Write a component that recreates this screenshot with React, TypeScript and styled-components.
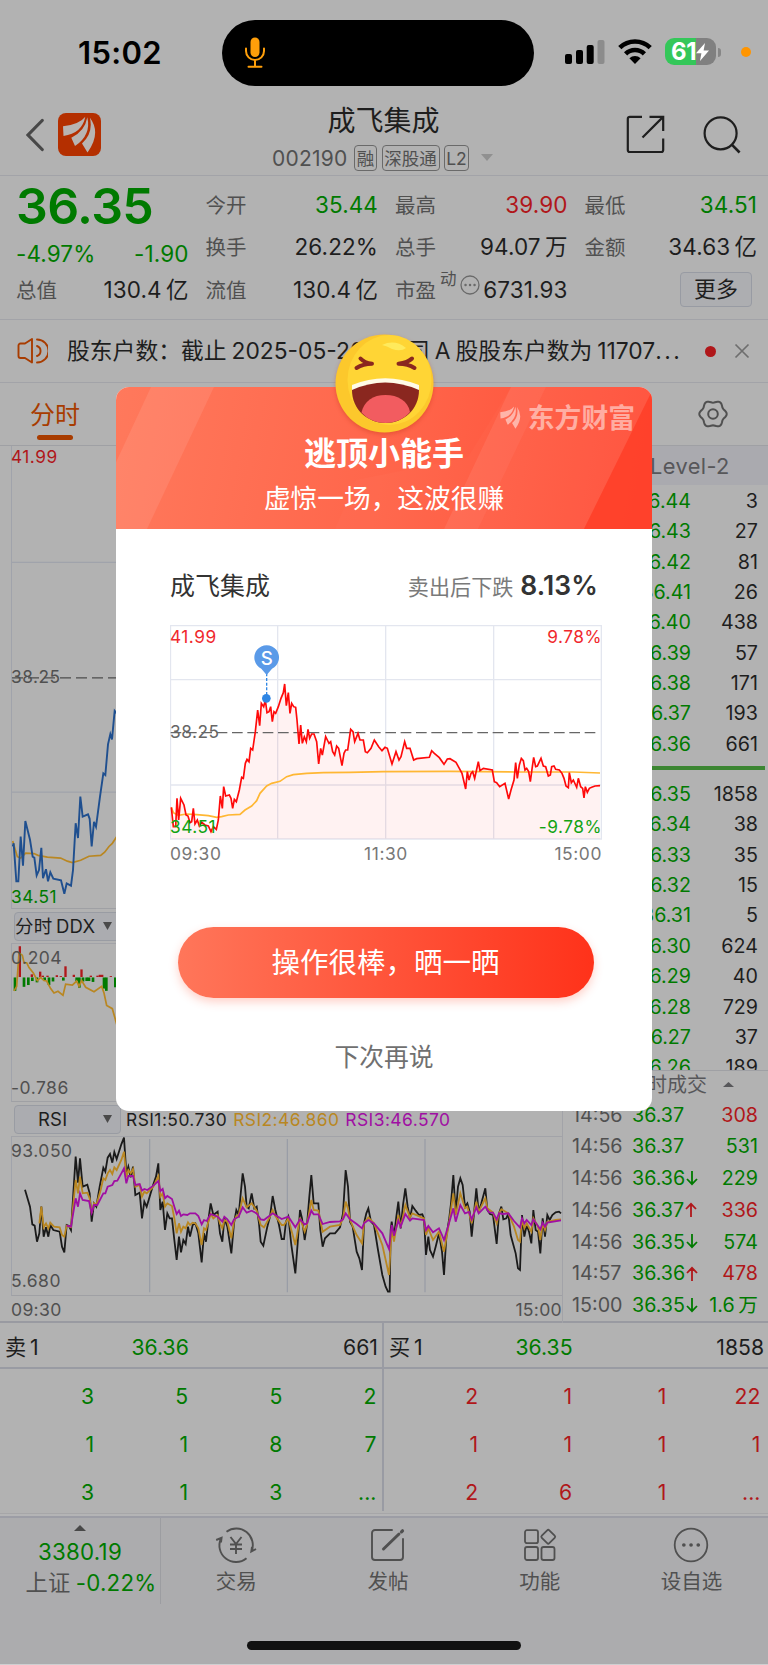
import React from "react";
import styled, { createGlobalStyle, css } from "styled-components";

const C = {
  bg: "#b2b2b2",
  bar: "#acacae",
  line: "#9fa0a4",
  faint: "#a2a3a8",
  grid: "#a0a3ab",
  ink: "#1e1e1e",
  sub: "#505050",
  green: "#007a00",
  red: "#b0171a",
  brand: "#a83c00",
};

const Global = createGlobalStyle`
  * { box-sizing: border-box; }
  body { margin: 0; background: ${C.bg}; }
`;

const Page = styled.div`
  position: relative;
  width: 768px;
  height: 1665px;
  overflow: hidden;
  background: ${C.bg};
  color: ${C.ink};
  font-family: Inter, "Noto Sans CJK SC", sans-serif;
  font-size: 22px;
  display: flex;
  flex-direction: column;
  border-bottom: 1px solid #cfcfd1;
  white-space: nowrap;
`;

/* ---------- status bar ---------- */
const StatusBar = styled.div`
  height: 98px;
  flex: none;
  display: grid;
  grid-template-columns: 222px 312px 1fr;
`;
const Clock = styled.div`
  padding: 37px 0 0 78px;
  font-size: 31px;
  line-height: 32px;
  font-weight: 600;
  color: #000;
  letter-spacing: 0.3px;
`;
const Island = styled.div`
  margin-top: 20px;
  height: 66px;
  border-radius: 33px;
  background: #000;
  padding: 17px 0 0 22px;
`;
const StatusIcons = styled.div`
  display: flex;
  align-items: flex-start;
  padding: 38px 0 0 31px;
`;
const Battery = styled.div`
  width: 51px;
  height: 27px;
  margin-left: 13px;
  border-radius: 9px;
  background: linear-gradient(90deg, #34c759 31px, #808080 31px);
  color: #fff;
  font-size: 24px;
  font-weight: 700;
  line-height: 28px;
  letter-spacing: -0.4px;
  padding-left: 6px;
  display: flex;
  align-items: center;
`;
const BatteryCap = styled.div`
  width: 3px;
  height: 9px;
  margin: 10px 0 0 2px;
  border-radius: 0 4px 4px 0;
  background: #868686;
`;
const PrivacyDot = styled.div`
  width: 10px;
  height: 10px;
  margin: 9px 0 0 20px;
  border-radius: 50%;
  background: #ff9500;
`;

/* ---------- header ---------- */
const Header = styled.header`
  height: 78px;
  flex: none;
  display: grid;
  grid-template-columns: 228px 1fr 228px;
  border-bottom: 1px solid ${C.faint};
`;
const HeaderLeft = styled.div`
  display: flex;
  gap: 14px;
  padding: 15px 0 0 26px;
`;
const HeaderRight = styled.div`
  display: flex;
  gap: 38px;
  padding: 17px 0 0 86px;
`;
const TitleBlock = styled.div`
  display: flex;
  flex-direction: column;
`;
const StockTitle = styled.div`
  margin-top: 6px;
  padding-right: 1px;
  text-align: center;
  font-size: 28px;
  line-height: 34px;
`;
const CodeRow = styled.div`
  display: flex;
  align-items: center;
  padding-left: 44px;
  height: 26px;
  margin-top: 7px;
  font-size: 21px;
  color: ${C.sub};
  letter-spacing: 0.25px;
`;
const Tag = styled.span<{ $w: number }>`
  width: ${(p) => p.$w}px;
  height: 26px;
  margin-left: 4.5px;
  border: 1px solid #6a6a6a;
  border-radius: 4px;
  font-size: 17.5px;
  line-height: 25px;
  letter-spacing: 0;
  display: flex;
  justify-content: center;
`;
const CodeText = styled.span`
  width: 77.5px;
`;

/* ---------- quote ---------- */
const Quote = styled.section`
  height: 144px;
  flex: none;
  display: grid;
  grid-template-columns: repeat(4, 172.5px);
  column-gap: 17px;
  padding: 7px 0 0 16px;
  border-bottom: 1px solid ${C.faint};
`;
const QuoteCol = styled.div`
  display: flex;
  flex-direction: column;
`;
const Cell = styled.div`
  height: 42.5px;
  display: flex;
  align-items: center;
  justify-content: space-between;
  line-height: 43px;
`;
const Label = styled.span`
  font-size: 20.5px;
  color: ${C.sub};
  padding-top: 2px;
`;
const Value = styled.span<{ $c?: string }>`
  color: ${(p) => p.$c ?? C.ink};
  font-size: 22.5px;
  letter-spacing: 0.1px;
`;
const BigPrice = styled.div`
  height: 50px;
  font-size: 50px;
  line-height: 47px;
  font-weight: 600;
  letter-spacing: -0.6px;
  color: ${C.green};
`;
const ChangeRow = styled.div`
  display: flex;
  justify-content: space-between;
  height: 35px;
  line-height: 41px;
  font-size: 22.5px;
  letter-spacing: 0.1px;
  color: ${C.green};
`;
const Sup = styled.span`
  font-size: 16.5px;
  color: ${C.sub};
  margin: -19px 3px 0 4px;
`;
const PeLabel = styled.span`
  display: flex;
  align-items: center;
`;
const MoreButton = styled.div`
  width: 72px;
  height: 35px;
  margin: 0 5px 0 auto;
  border: 1px solid #989ba3;
  border-radius: 4px;
  background: #adaeb1;
  line-height: 33px;
  text-align: center;
  font-size: 22px;
`;

/* ---------- notice ---------- */
const Notice = styled.section`
  height: 63px;
  flex: none;
  display: flex;
  align-items: center;
  padding-left: 17px;
  border-bottom: 1px solid ${C.faint};
  font-size: 22.8px;
  line-height: 40px;
`;
const NoticeText = styled.div`
  display: flex;
  gap: 5px;
  width: 618px;
  margin-left: 19px;
`;
const NoticeCompany = styled.span`
  margin-left: -8px;
`;
const Ellipsis = styled.span`
  letter-spacing: 2.4px;
`;
const NoticeDot = styled.div`
  width: 11px;
  height: 11px;
  margin: 0 23px 0 20px;
  border-radius: 50%;
  background: #b0171a;
`;

/* ---------- tabs ---------- */
const Tabs = styled.nav`
  height: 63px;
  flex: none;
  display: flex;
  justify-content: space-between;
  border-bottom: 1px solid ${C.line};
`;
const ActiveTab = styled.div`
  width: 50px;
  margin-left: 30px;
  padding-top: 15px;
  display: flex;
  flex-direction: column;
  align-items: center;
  font-size: 25px;
  line-height: 34px;
  color: ${C.brand};
  &::after {
    content: "";
    width: 36px;
    height: 5px;
    margin-top: 3px;
    border-radius: 3px;
    background: ${C.brand};
  }
`;
const GearSlot = styled.div`
  padding: 16px 40px 0 0;
`;

/* ---------- market area ---------- */
const Market = styled.section`
  height: 877px;
  flex: none;
  display: grid;
  grid-template-columns: 563px 1fr;
  border-bottom: 2px solid #999aa1;
`;
const Charts = styled.div`
  padding-left: 11px;
  border-right: 1px solid ${C.faint};
`;
const Plot = styled.div<{ $h: number }>`
  height: ${(p) => p.$h}px;
  display: grid;
  border-left: 1px solid ${C.grid};
  border-bottom: 1px solid ${C.line};
  & > * {
    grid-area: 1 / 1;
  }
  svg {
    width: 551px;
    height: ${(p) => p.$h - 1}px;
    display: block;
  }
  svg * {
    vector-effect: non-scaling-stroke;
  }
`;
const AxisLabels = styled.div<{ $pt: number; $pb: number }>`
  display: flex;
  flex-direction: column;
  justify-content: space-between;
  padding: ${(p) => p.$pt}px 0 ${(p) => p.$pb}px 0;
  margin-left: -1px;
`;
const AxisLabel = styled.span<{ $c?: string; $s?: number }>`
  font-size: ${(p) => p.$s ?? 17.3}px;
  line-height: 20px;
  letter-spacing: 0.5px;
  color: ${(p) => p.$c ?? C.sub};
`;
const IndicatorBar = styled.div<{ $line?: boolean }>`
  height: 35px;
  display: flex;
  align-items: center;
  gap: 6px;
  padding-left: 3px;
  font-size: 17.4px;
  letter-spacing: 0.45px;
  border-bottom: 1px solid ${(p) => (p.$line ? C.faint : "transparent")};
`;
const RsiValue = styled.span<{ $c: string }>`
  color: ${(p) => p.$c};
  line-height: 22px;
  padding-top: 1px;
`;
const Picker = styled.div<{ $center?: boolean }>`
  width: 107px;
  height: 29px;
  border: 1px solid #999ca3;
  border-radius: 4px;
  background: #abacb0;
  display: flex;
  align-items: center;
  justify-content: space-between;
  padding: 0 8px 0 ${(p) => (p.$center ? 23 : 0)}px;
  font-size: 18.5px;
  line-height: 29px;
  letter-spacing: 0.2px;
  color: ${C.ink};
  margin-right: -1px;
`;
const TimeAxis = styled.div`
  display: flex;
  justify-content: space-between;
  font-size: 17.6px;
  letter-spacing: 0.3px;
  line-height: 27px;
  color: ${C.sub};
`;

const Side = styled.div`
  display: flex;
  flex-direction: column;
`;
const SideHead = styled.div`
  height: 39px;
  background: #aaaaaf;
  padding-left: 87px;
  font-size: 21.8px;
  letter-spacing: 0.4px;
  line-height: 41px;
  color: #57575a;
`;
const Book = styled.div`
  height: 585.5px;
  overflow: hidden;
  border-bottom: 1px solid ${C.line};
`;
const BookRow = styled.div`
  height: 30.35px;
  line-height: 32px;
  font-size: 19.7px;
  display: grid;
  grid-template-columns: 128px 67px;
  text-align: right;
  & > :first-child {
    color: ${C.green};
  }
`;
const BookSplit = styled.div`
  height: 4px;
  margin: 8px 3px 8px 0;
  background: #3c8632;
`;
const TradesHead = styled.div`
  height: 28px;
  padding-left: 64px;
  display: flex;
  align-items: center;
  gap: 16px;
  font-size: 20px;
  line-height: 30px;
  color: #57575a;
`;
const TradeRow = styled.div<{ $c: string }>`
  height: 31.8px;
  line-height: 32px;
  font-size: 19.7px;
  display: grid;
  grid-template-columns: 60px 68px 1fr;
  padding: 0 10px 0 9px;
  color: ${C.green};
  & > :first-child {
    color: ${C.sub};
  }
  & > :last-child {
    text-align: right;
    color: ${(p) => p.$c};
  }
`;
const PriceTick = styled.span`
  display: flex;
  align-items: center;
  gap: 1px;
`;

/* ---------- queue ---------- */
const Queues = styled.section`
  height: 193px;
  flex: none;
  display: grid;
  grid-template-columns: 384px 384px;
`;
const Queue = styled.div<{ $first?: boolean }>`
  height: 188px;
  ${(p) =>
    p.$first &&
    css`
      border-right: 2px solid #999ba3;
    `}
`;
const QueueHead = styled.div`
  height: 46px;
  border-bottom: 2px solid #999ba3;
  display: grid;
  grid-template-columns: 98px 1fr 98px;
  padding: 0 4px 0 5px;
  font-size: 21.2px;
  line-height: 49px;
  & > :nth-child(2) {
    color: ${C.green};
    padding-left: 28.5px;
  }
  & > :last-child {
    text-align: right;
  }
`;
const QueueGrid = styled.div<{ $c: string }>`
  display: grid;
  grid-template-columns: repeat(4, 94.1px);
  grid-auto-rows: 48.1px;
  padding-top: 3px;
  line-height: 48px;
  font-size: 21.2px;
  text-align: right;
  color: ${(p) => p.$c};
`;

/* ---------- tab bar ---------- */
const BottomBar = styled.footer`
  flex: 1;
  background: ${C.bar};
  border-top: 2px solid #9c9da5;
  box-shadow: 0 -2px 0 #b4b4b5, 0 -3px 0 #a6a6a8;
  display: grid;
  grid-template-rows: 86px 1fr;
`;
const BarItems = styled.div`
  display: grid;
  grid-template-columns: 161px repeat(4, 151.7px);
`;
const IndexBox = styled.div`
  border-right: 1px solid #9c9da1;
  display: flex;
  flex-direction: column;
  align-items: center;
  font-size: 22.3px;
  line-height: 32px;
  letter-spacing: 0.25px;
  color: ${C.green};
  padding-top: 7px;
  svg {
    margin-bottom: 5px;
  }
`;
const IndexName = styled.div`
  display: flex;
  gap: 5px;
  margin: -1px 0 0 22px;
  & > :first-child {
    color: ${C.sub};
  }
`;
const BarItem = styled.div`
  display: flex;
  flex-direction: column;
  align-items: center;
  padding: 7px 1px 0 0;
  font-size: 20.5px;
  line-height: 33px;
  color: ${C.sub};
`;
const HomeIndicator = styled.div`
  width: 274px;
  height: 9px;
  margin: 37px auto 0;
  border-radius: 5px;
  background: #111;
`;

/* ---------- dialog ---------- */
const Dialog = styled.div`
  position: absolute;
  left: 116px;
  top: 387px;
  width: 536px;
  height: 724px;
  border-radius: 13px;
  background: #fff;
  color: #333;
  display: flex;
  flex-direction: column;
`;
const Hero = styled.div`
  height: 142px;
  flex: none;
  display: grid;
  border-radius: 13px 13px 0 0;
  overflow: hidden;
  background: linear-gradient(100deg, #ff795c 0%, #ff664b 50%, #ff4c35 100%);
  & > * {
    grid-area: 1 / 1;
  }
`;
const HeroText = styled.div`
  padding-top: 46px;
  text-align: center;
  color: #fff;
`;
const HeroTitle = styled.div`
  font-size: 32px;
  line-height: 42px;
  font-weight: 600;
`;
const HeroSub = styled.div`
  font-size: 26.7px;
  line-height: 46px;
`;
const Watermark = styled.div`
  display: flex;
  align-items: flex-start;
  gap: 6px;
  justify-self: end;
  padding: 15px 17px 0 0;
  font-size: 26.8px;
  line-height: 33px;
  font-weight: 700;
  color: rgba(255, 255, 255, 0.5);
  svg {
    margin-top: 4px;
  }
`;
const Emoji = styled.svg`
  position: absolute;
  left: 218.5px;
  top: -53.5px;
  width: 99px;
  height: 99px;
  overflow: visible;
  filter: drop-shadow(0 2px 2px rgba(190, 50, 20, 0.35));
`;
const Summary = styled.div`
  height: 96px;
  padding: 40px 54px 0 54px;
  display: flex;
  justify-content: space-between;
  line-height: 34px;
  font-size: 25px;
`;
const Drop = styled.div`
  display: flex;
  gap: 7px;
  font-size: 21.1px;
  line-height: 37px;
  color: #7a7a7a;
  & > b {
    font-size: 26.5px;
    line-height: 33px;
    font-weight: 600;
    color: #333;
    letter-spacing: 0.1px;
  }
`;
const MiniPlot = styled.div`
  width: 432px;
  height: 215px;
  margin-left: 54px;
  display: grid;
  & > * {
    grid-area: 1 / 1;
  }
`;
const MiniLabels = styled.div`
  display: grid;
  grid-template-columns: 1fr 1fr;
  align-content: space-between;
  padding: 2px 0 3px 0;
  & > :nth-child(even) {
    text-align: right;
  }
`;
const MiniTimes = styled.div`
  width: 432px;
  margin-left: 54px;
  display: grid;
  grid-template-columns: 1fr 1fr 1fr;
  font-size: 17.4px;
  letter-spacing: 0.6px;
  line-height: 28px;
  color: #777;
  & > :nth-child(2) {
    text-align: center;
  }
  & > :last-child {
    text-align: right;
  }
`;
const ShareButton = styled.div`
  width: 416px;
  height: 71px;
  margin: 59px 0 0 61.5px;
  border-radius: 36px;
  background: linear-gradient(90deg, #ff765a, #ff321a);
  box-shadow: 0 4px 10px rgba(255, 70, 40, 0.25);
  color: #fff;
  font-size: 28.5px;
  line-height: 71px;
  text-align: center;
`;
const Later = styled.div`
  margin-top: 41px;
  text-align: center;
  font-size: 24.8px;
  line-height: 36px;
  color: #707070;
`;

/* ---------- data ---------- */
const PRICE_BG =
  "36,912 39,905 47,990 53,990 60,890 67,955 74,855 88,897 96,935 101,937 108,977 115,965 122,915 127,983 136,963 142,990 149,970 158,984 181,988 191,1018 198,995 211,1000 217,965 225,860 232,893 239,800 246,845 262,840 267,850 273,912 280,857 286,868 298,800 308,748 314,752 322,683 329,660 334,672 342,608 350,615 365,560";
const AVG_BG =
  "36,900 42,915 50,935 60,938 75,927 100,928 112,932 140,936 180,938 200,945 215,948 240,943 265,934 300,932 312,925 325,912 335,905 350,888";
const DDX =
  "40,1235 48,1225 55,1150 65,1155 70,1172 78,1172 85,1183 98,1195 110,1212 120,1205 130,1212 138,1213 150,1230 160,1240 172,1236 187,1245 195,1220 215,1222 228,1213 235,1225 243,1212 255,1227 280,1237 303,1225 310,1240 318,1268 335,1275 350,1315";
const UP = [[57, 1135], [93, 1198], [118, 1192], [126, 1201], [140, 1201], [168, 1200], [180, 1202], [194, 1180], [219, 1199], [242, 1187], [270, 1201], [290, 1201], [297, 1199], [304, 1199], [330, 1202]];
const DOWN = [[43, 1235], [70, 1226], [83, 1222], [95, 1213], [109, 1216], [132, 1211], [145, 1222], [157, 1214], [188, 1212], [228, 1213], [236, 1228], [247, 1214], [258, 1213], [265, 1213], [277, 1215], [310, 1230], [317, 1235], [344, 1227]];

const shift = (s: string, dx: number) =>
  s.split(" ").map((p) => { const [x, y] = p.split(",").map(Number); return `${x + dx},${y}`; }).join(" ");

const RSI1 =
  "73,299 88,350 95,403 102,407 109,455 116,430 122,350 129,440 136,412 143,440 149,405 158,420 177,425 184,470 191,487 198,405 205,408 211,420 218,310 225,200 232,278 238,205 246,290 260,284 267,310 273,395 280,340 287,350 297,290 308,233 314,245 321,203 328,192 335,218 341,186 348,207 362,163 370,143 377,250 383,230 390,262 397,230 404,315 417,308 424,385 431,335 438,350 458,283 466,260 473,220 479,360 486,335 493,420 500,370 507,385 514,385 521,450 528,510 535,440 541,487 548,450 555,462 562,410 568,440 576,405 584,400 593,430 603,517 610,430 616,455 623,390 630,340 638,375 651,365 658,430 665,455 671,385 680,410 692,490 700,400 707,360 714,375 726,250 733,290 738,350 744,355 753,310 761,355 768,350 775,400 780,455 788,467 800,410 808,380 816,318 824,360 835,405 843,447 850,447 856,395 863,380 872,465 884,550 " +
  shift("51,460 58,360 64,385 72,450 79,405 86,320 92,255 99,340 113,340 119,420 126,470 133,445 148,430 163,430 178,412 187,370 195,240 202,290 208,395 216,410 228,485 236,505 244,540 250,400 257,370 263,355 271,395 280,405 292,480 305,555 315,590 322,605 327,605 330,420 333,395 340,440 347,380 353,335 360,415 367,345 374,295 381,350 388,385 395,348 405,362 415,375 425,373 430,385 436,495 443,440 448,480 457,500 465,470 475,430 484,485 490,555 497,440 505,390 511,340 518,255 525,370 532,290 539,265 546,285 553,350 560,340 567,365 573,440 580,370 587,295 594,365 602,340 614,295 620,360 628,372 637,375 648,462 655,370 662,350 668,388 677,385 683,370 690,435 705,490 712,535 718,540 724,375 731,440 738,405 745,425 752,460 758,360 765,420 772,425 779,490 786,385 793,440 800,375 807,390 815,375 825,367 835,365 841,370", 840);
const RSI2 =
  "116,400 122,350 129,412 136,400 143,415 149,398 160,410 177,412 184,435 191,440 198,407 211,412 225,270 232,310 238,260 246,310 260,308 267,325 273,370 280,340 287,345 300,300 308,265 314,270 321,250 328,240 335,252 341,232 348,240 362,210 370,185 377,262 383,240 390,250 397,237 404,290 417,285 424,320 431,305 438,310 458,290 473,258 479,320 486,310 493,350 500,340 514,348 521,385 528,430 535,400 541,425 548,410 555,415 562,397 568,405 576,398 584,400 593,415 603,465 610,415 616,420 630,372 638,385 651,375 658,400 665,415 671,390 680,395 692,445 700,395 707,378 714,375 726,325 738,352 753,340 768,362 780,405 790,412 808,380 816,360 824,378 843,405 850,405 863,385 872,420 884,465 " +
  shift("58,383 72,425 79,405 92,330 99,360 113,362 126,425 148,410 178,405 187,385 195,335 202,355 208,390 228,435 244,460 250,400 263,382 280,400 305,465 315,510 325,555 333,415 340,455 353,375 360,412 374,345 388,382 395,370 430,385 436,435 443,415 457,450 475,425 490,485 505,400 518,310 525,375 539,310 553,355 560,350 573,400 587,335 594,365 614,325 620,355 637,368 648,400 655,370 662,358 683,370 700,410 712,450 718,455 724,385 731,415 738,400 752,425 758,385 772,410 779,450 786,400 793,420 800,395 825,390 841,388", 840);
const RSI3 =
  "198,407 211,410 225,325 232,350 238,310 246,330 265,333 273,368 280,345 290,345 308,310 314,310 321,290 335,285 341,273 350,272 362,250 370,235 377,280 383,258 397,258 404,285 417,282 424,302 431,297 440,300 458,287 473,273 479,303 486,297 493,325 500,318 514,327 521,350 528,372 535,362 541,378 548,373 560,375 568,370 584,370 593,378 603,403 610,390 618,393 630,372 651,380 665,395 671,380 680,388 692,405 700,388 714,380 726,352 738,368 753,362 768,370 780,388 790,390 816,370 843,387 863,380 884,412 " +
  shift("58,388 72,403 79,400 92,362 99,373 113,373 126,402 148,396 178,394 187,388 195,370 208,388 228,402 244,415 250,400 263,390 280,400 305,430 325,477 333,405 340,437 353,392 360,410 374,372 388,392 395,385 430,390 436,420 443,408 457,427 475,415 484,435 490,450 505,400 518,355 525,395 539,345 553,370 565,366 573,388 587,352 594,370 614,350 625,367 637,368 648,388 655,370 668,372 683,370 700,393 718,413 724,385 731,400 738,390 752,405 758,388 779,418 786,398 793,410 800,398 841,391", 840);

const MINI_PRICE =
  "64,742 70,800 77,800 81,715 86,780 92,715 102,735 108,765 114,768 120,788 125,785 130,745 135,792 142,780 148,798 155,787 165,795 175,798 183,815 190,800 199,808 205,780 211,708 217,745 221,680 227,708 238,705 243,715 248,745 253,718 259,725 268,690 275,652 280,655 286,610 291,598 297,605 302,565 308,570 316,515 323,450 329,497 334,430 341,440 346,420 351,458 357,455 362,440 367,485 372,455 377,460 385,440 393,415 400,398 404,372 409,437 415,398 420,460 425,430 431,440 437,442 441,480 447,552 452,495 457,550 463,530 469,545 474,508 479,535 485,522 492,522 500,545 506,612 512,565 517,585 527,530 532,540 537,550 542,545 548,575 554,585 560,558 566,565 576,617 582,580 587,570 593,570 602,508 609,515 614,545 624,520 630,540 640,540 646,575 652,578 663,565 673,540 686,560 696,572 705,562 712,565 726,612 738,575 747,600 753,590 764,545 770,565 780,565 791,600 800,596 838,592 845,572 853,580 868,593 882,613 892,597 900,596 918,607 928,625 936,640 947,687 952,635 957,660 963,640 968,635 974,655 985,605 990,632 1000,625 1027,630 1033,665 1040,668 1049,680 1065,670 1076,717 1083,690 1092,660 1097,608 1102,655 1108,615 1114,595 1120,602 1125,630 1130,625 1136,635 1141,665 1147,620 1151,592 1157,620 1162,618 1173,595 1180,618 1187,620 1195,648 1201,645 1205,620 1212,618 1217,628 1228,630 1236,640 1242,655 1248,678 1255,683 1258,638 1264,668 1270,660 1280,682 1285,655 1292,680 1298,685 1302,714 1306,680 1312,697 1318,685 1325,682 1335,678 1350,677";
const MINI_AVG =
  "64,742 70,758 85,766 110,762 140,764 175,767 200,772 215,770 235,765 270,763 285,750 305,738 320,722 330,700 350,678 365,670 390,664 410,650 430,644 470,640 520,638 600,637 700,635 900,634 1100,636 1270,636 1350,639";

const ASKS: [string, string][] = [["36.44", "3"], ["36.43", "27"], ["36.42", "81"], ["36.41", "26"], ["36.40", "438"], ["36.39", "57"], ["36.38", "171"], ["36.37", "193"], ["36.36", "661"]];
const BIDS: [string, string][] = [["36.35", "1858"], ["36.34", "38"], ["36.33", "35"], ["36.32", "15"], ["36.31", "5"], ["36.30", "624"], ["36.29", "40"], ["36.28", "729"], ["36.27", "37"], ["36.26", "189"]];
const TRADES: [string, string, string, string, string][] = [
  ["14:56", "36.37", "", "308", C.red],
  ["14:56", "36.37", "", "531", C.green],
  ["14:56", "36.36", "down", "229", C.green],
  ["14:56", "36.37", "up", "336", C.red],
  ["14:56", "36.35", "down", "574", C.green],
  ["14:57", "36.36", "up", "478", C.red],
  ["15:00", "36.35", "down", "1.6\u2009万", C.green],
];
const SELL = ["3", "5", "5", "2", "1", "1", "8", "7", "3", "1", "3", "..."];
const BUY = ["2", "1", "1", "22", "1", "1", "1", "1", "2", "6", "1", "..."];

/* ---------- drawings ---------- */
const Petals = ({ fill, size }: { fill: string; size: number }) => (
  <svg width={size} height={size} viewBox="4 3 36 37">
    <g fill={fill}>
      <path d="M5.5 13.2 Q22 11.5 27.8 3.8 Q24.5 20.5 6 23 Z" />
      <path d="M29.8 4.2 Q34 22 17.5 33 L13.8 24.8 Q27.5 18 29.8 4.2 Z" />
      <path d="M32.4 4.8 Q44 20 30 39.5 L24.5 30.5 Q36 20 32.4 4.8 Z" />
    </g>
  </svg>
);

const LogoBox = styled.div`
  width: 43px;
  height: 43px;
  border-radius: 8px;
  background: #b42f00;
  display: flex;
  align-items: center;
  justify-content: center;
`;

const Triangle = ({ w, h, up, color }: { w: number; h: number; up?: boolean; color: string }) => (
  <svg width={w} height={h} viewBox="0 0 10 10" preserveAspectRatio="none">
    <path d={up ? "M0 10 L5 0 L10 10Z" : "M0 0 L10 0 L5 10Z"} fill={color} />
  </svg>
);

const gearPath =
  Array.from({ length: 72 }, (_, i) => {
    const t = (i * Math.PI) / 36;
    const r = 12.5 + 1.2 * Math.cos(6 * t);
    return `${i ? "L" : "M"}${(15 + r * Math.cos(t)).toFixed(2)} ${(15 + r * Math.sin(t)).toFixed(2)}`;
  }).join(" ") + "Z";

const Tick = ({ dir }: { dir: string }) =>
  dir ? (
    <svg width="12" height="15" viewBox="0 0 12 15" fill="none" stroke={dir === "up" ? C.red : C.green} strokeWidth="1.8">
      <path d={dir === "up" ? "M6 15 V2 M1 7 L6 1.8 L11 7" : "M6 0 V13 M1 8 L6 13.2 L11 8"} />
    </svg>
  ) : null;

export default function App() {
  return (
    <Page>
      <Global />
      <StatusBar>
        <Clock>15:02</Clock>
        <Island>
          <svg width="22" height="32" viewBox="0 0 22 32" fill="none" stroke="#ff9f0a">
            <rect x="6.5" y="0.5" width="9" height="19.5" rx="4.5" fill="#ff9f0a" stroke="none" />
            <path d="M2 11.5 V14 a9 9 0 0 0 18 0 V11.5" strokeWidth="2" strokeLinecap="round" />
            <path d="M11 24 V29.5 M4.5 29.7 H17.5" strokeWidth="2" strokeLinecap="round" />
          </svg>
        </Island>
        <StatusIcons>
          <svg width="40" height="26" viewBox="0 0 40 26">
            <rect x="0" y="16" width="7" height="10" rx="2" />
            <rect x="11" y="12" width="7" height="14" rx="2" />
            <rect x="21.7" y="7" width="7" height="19" rx="2" />
            <rect x="32.5" y="2" width="7" height="24" rx="2" fill="#8c8c8c" />
          </svg>
          <svg width="34" height="26" viewBox="0 0 34 26" fill="none" stroke="#000" strokeWidth="4.6" style={{ marginLeft: 13 }}>
            <path d="M1.8 9.6 A21.8 21.8 0 0 1 32.2 9.6" />
            <path d="M7.6 15.8 A13.4 13.4 0 0 1 26.4 15.8" />
            <path d="M17 26 L11.4 20.2 A8.5 8.5 0 0 1 22.6 20.2 Z" fill="#000" stroke="none" />
          </svg>
          <Battery>
            61
            <svg width="13" height="18" viewBox="0 0 13 18">
              <path d="M9 0 L0 10.3 H5.4 L4 18 L13 7.4 H7.6 Z" fill="#fff" />
            </svg>
          </Battery>
          <BatteryCap />
          <PrivacyDot />
        </StatusIcons>
      </StatusBar>

      <Header>
        <HeaderLeft>
          <svg width="18" height="43" viewBox="0 0 18 43" fill="none" stroke="#484848" strokeWidth="3.2" strokeLinecap="round">
            <path d="M16.2 7.5 L2 22 L16.2 36.5" />
          </svg>
          <LogoBox>
            <Petals fill="#b8b4b2" size={37} />
          </LogoBox>
        </HeaderLeft>
        <TitleBlock>
          <StockTitle>成飞集成</StockTitle>
          <CodeRow>
            <CodeText>002190</CodeText>
            <Tag $w={23}>融</Tag>
            <Tag $w={58}>深股通</Tag>
            <Tag $w={25}>L2</Tag>
            <svg width="12" height="7" viewBox="0 0 12 7" style={{ marginLeft: 12, marginTop: -1 }}>
              <path d="M0 0 H12 L6 7Z" fill="#909090" />
            </svg>
          </CodeRow>
        </TitleBlock>
        <HeaderRight>
          <svg width="39" height="39" viewBox="0 0 39 39" fill="none" stroke={C.ink} strokeWidth="2.2">
            <path d="M16 1.8 H3.8 a2 2 0 0 0 -2 2 V35 a2 2 0 0 0 2 2 H35.2 a2 2 0 0 0 2 -2 V23.5" />
            <path d="M23.5 1.8 H37.2 V16 M36.6 2.4 L16.5 22.5" />
          </svg>
          <svg width="39" height="39" viewBox="0 0 39 39" fill="none" stroke={C.ink} strokeWidth="2.2">
            <circle cx="17.6" cy="18.3" r="16" />
            <path d="M28.6 29.3 L36.6 37.5" strokeWidth="2.6" />
          </svg>
        </HeaderRight>
      </Header>

      <Quote>
        <QuoteCol>
          <BigPrice>36.35</BigPrice>
          <ChangeRow>
            <span>-4.97%</span>
            <span>-1.90</span>
          </ChangeRow>
          <Cell>
            <Label>总值</Label>
            <Value>130.4{"\u2009"}亿</Value>
          </Cell>
        </QuoteCol>
        <QuoteCol>
          <Cell><Label>今开</Label><Value $c={C.green}>35.44</Value></Cell>
          <Cell><Label>换手</Label><Value>26.22%</Value></Cell>
          <Cell><Label>流值</Label><Value>130.4{"\u2009"}亿</Value></Cell>
        </QuoteCol>
        <QuoteCol>
          <Cell><Label>最高</Label><Value $c={C.red}>39.90</Value></Cell>
          <Cell><Label>总手</Label><Value>94.07{"\u2009"}万</Value></Cell>
          <Cell>
            <PeLabel>
              <Label>市盈</Label>
              <Sup>动</Sup>
              <svg width="20" height="20" viewBox="0 0 20 20" style={{ marginTop: -9 }}>
                <circle cx="10" cy="10" r="9" fill="none" stroke="#6a6a6a" strokeWidth="1.3" />
                <path d="M5.5 10h.1M10 10h.1M14.5 10h.1" stroke="#6a6a6a" strokeWidth="2.4" strokeLinecap="round" />
              </svg>
            </PeLabel>
            <Value>6731.93</Value>
          </Cell>
        </QuoteCol>
        <QuoteCol>
          <Cell><Label>最低</Label><Value $c={C.green}>34.51</Value></Cell>
          <Cell><Label>金额</Label><Value>34.63{"\u2009"}亿</Value></Cell>
          <Cell><MoreButton>更多</MoreButton></Cell>
        </QuoteCol>
      </Quote>

      <Notice>
        <svg width="31" height="28" viewBox="0 0 31 28" fill="none" stroke={C.brand} strokeWidth="1.9" strokeLinejoin="round" strokeLinecap="round">
          <path d="M15 2 L8 6.5 H3.5 a2 2 0 0 0 -2 2 V19 a2 2 0 0 0 2 2 H8 L15 25.5 Z" />
          <path d="M20 2.5 a11.5 11.5 0 0 1 0 23 M20 9 a5.3 5.3 0 0 1 0 10" />
        </svg>
        <NoticeText>
          <span>股东户数：截止</span>
          <span>2025-05-20</span>
          <NoticeCompany>，公司</NoticeCompany>
          <span>A</span>
          <span>股股东户数为</span>
          <span>11707<Ellipsis>...</Ellipsis></span>
        </NoticeText>
        <NoticeDot />
        <svg width="16" height="16" viewBox="0 0 16 16" stroke="#6e6e6e" strokeWidth="1.7" style={{ marginLeft: -5 }}>
          <path d="M1.5 1.5 L14.5 14.5 M14.5 1.5 L1.5 14.5" />
        </svg>
      </Notice>

      <Tabs>
        <ActiveTab>分时</ActiveTab>
        <GearSlot>
          <svg width="30" height="30" viewBox="0 0 30 30" fill="none" stroke="#505050" strokeWidth="2">
            <path d={gearPath} />
            <circle cx="15" cy="15" r="4.8" />
          </svg>
        </GearSlot>
      </Tabs>

      <Market>
        <Charts>
          <Plot $h={463}>
            <svg viewBox="34 14 1653 1036" preserveAspectRatio="none" fill="none">
              <path d="M34 275 H1687 M34 790 H1687" stroke={C.grid} strokeWidth="1.3" />
              <path d="M34 534 H1687" stroke="#4c4c4c" strokeWidth="1.3" strokeDasharray="11 5" />
              <polyline points={AVG_BG} stroke="#b98722" strokeWidth="1.7" />
              <polyline points={PRICE_BG} stroke="#1f4f8f" strokeWidth="1.9" />
            </svg>
            <AxisLabels $pt={1} $pb={1}>
              <AxisLabel $c={C.red}>41.99</AxisLabel>
              <AxisLabel>38.25</AxisLabel>
              <AxisLabel $c={C.green}>34.51</AxisLabel>
            </AxisLabels>
          </Plot>
          <IndicatorBar $line>
            <Picker>
              分时{"\u2009"}DDX
              <Triangle w={9} h={8} color="#4a4a4a" />
            </Picker>
          </IndicatorBar>
          <Plot $h={158}>
            <svg viewBox="34 1130 1653 352" preserveAspectRatio="none" fill="none">
              {UP.map(([x, y]) => (
                <rect key={x} x={x - 3} y={y} width="7" height={1204 - y} fill="#b0171a" />
              ))}
              {DOWN.map(([x, y]) => (
                <rect key={x} x={x - 4} y="1205" width="8" height={y - 1205} fill="#007a00" />
              ))}
              <polyline points={DDX} stroke="#b98722" strokeWidth="1.7" />
            </svg>
            <AxisLabels $pt={4} $pb={3}>
              <AxisLabel $s={17.5}>0.204</AxisLabel>
              <AxisLabel $s={17.5}>-0.786</AxisLabel>
            </AxisLabels>
          </Plot>
          <IndicatorBar $line>
            <Picker $center>
              RSI
              <Triangle w={9} h={8} color="#4a4a4a" />
            </Picker>
            <RsiValue $c={C.ink}>RSI1:50.730</RsiValue>
            <RsiValue $c="#b98722">RSI2:46.860</RsiValue>
            <RsiValue $c="#a00fa3">RSI3:46.570</RsiValue>
          </IndicatorBar>
          <Plot $h={159}>
            <svg viewBox="34 141 1653 474" preserveAspectRatio="none" fill="none">
              <path d="M447 147 V607 M860 147 V607 M1273 147 V607" stroke="#989ca6" strokeWidth="1.2" />
              <polyline points={RSI1} stroke="#1a1a1a" strokeWidth="1.8" />
              <polyline points={RSI2} stroke="#b98722" strokeWidth="1.8" />
              <polyline points={RSI3} stroke="#a00fa3" strokeWidth="1.8" />
            </svg>
            <AxisLabels $pt={4} $pb={4}>
              <AxisLabel $s={17.5}>93.050</AxisLabel>
              <AxisLabel $s={17.5}>5.680</AxisLabel>
            </AxisLabels>
          </Plot>
          <TimeAxis>
            <span>09:30</span>
            <span>15:00</span>
          </TimeAxis>
        </Charts>

        <Side>
          <SideHead>Level-2</SideHead>
          <Book>
            {ASKS.map(([p, q]) => (
              <BookRow key={p}><span>{p}</span><span>{q}</span></BookRow>
            ))}
            <BookSplit />
            {BIDS.map(([p, q]) => (
              <BookRow key={p}><span>{p}</span><span>{q}</span></BookRow>
            ))}
          </Book>
          <TradesHead>
            分时成交
            <Triangle w={11} h={5} up color="#57575a" />
          </TradesHead>
          {TRADES.map(([t, p, d, q, c], i) => (
            <TradeRow key={i} $c={c}>
              <span>{t}</span>
              <PriceTick>{p}<Tick dir={d} /></PriceTick>
              <span>{q}</span>
            </TradeRow>
          ))}
        </Side>
      </Market>

      <Queues>
        <Queue $first>
          <QueueHead><span>卖{"\u2009"}1</span><span>36.36</span><span>661</span></QueueHead>
          <QueueGrid $c={C.green}>{SELL.map((v, i) => <span key={i}>{v}</span>)}</QueueGrid>
        </Queue>
        <Queue>
          <QueueHead><span>买{"\u2009"}1</span><span>36.35</span><span>1858</span></QueueHead>
          <QueueGrid $c={C.red}>{BUY.map((v, i) => <span key={i}>{v}</span>)}</QueueGrid>
        </Queue>
      </Queues>

      <BottomBar>
        <BarItems>
          <IndexBox>
            <Triangle w={12} h={6} up color="#484848" />
            <span>3380.19</span>
            <IndexName><span>上证</span><span>-0.22%</span></IndexName>
          </IndexBox>
          <BarItem>
            <svg width="42" height="40" viewBox="0 0 42 40" fill="none" stroke="#505050" strokeWidth="1.9">
              <path d="M11.5 6.8 A16.5 16.5 0 0 1 36.5 26.5 M41 24 L36.3 26.5 L37 22" />
              <path d="M31.5 33.2 A16.5 16.5 0 0 1 6 13.5 M1.2 15 L6.6 12.8 L6 17.5" />
              <path d="M15.5 12 L21 19 L26.5 12 M21 19 V29 M15 19.5 H27 M15 24 H27" />
            </svg>
            交易
          </BarItem>
          <BarItem>
            <svg width="40" height="40" viewBox="0 0 40 40" fill="none" stroke="#505050" strokeWidth="1.9" strokeLinecap="round">
              <path d="M24 5 H7 a3 3 0 0 0 -3 3 V32 a3 3 0 0 0 3 3 H32 a3 3 0 0 0 3 -3 V14" />
              <path d="M15.5 24 L31 9" strokeWidth="3" />
              <path d="M33.5 6.8 L34.5 5.8" strokeWidth="3.2" />
            </svg>
            发帖
          </BarItem>
          <BarItem>
            <svg width="40" height="40" viewBox="0 0 40 40" fill="none" stroke="#505050" strokeWidth="1.8">
              <rect x="5" y="5.2" width="13" height="13" rx="2" />
              <rect x="5" y="22" width="13" height="13" rx="2" />
              <rect x="21.5" y="22" width="13" height="13" rx="2" />
              <rect x="22.8" y="6.4" width="10.6" height="10.6" rx="1.5" transform="rotate(45 28.1 11.9)" />
            </svg>
            功能
          </BarItem>
          <BarItem>
            <svg width="40" height="40" viewBox="0 0 40 40" fill="none" stroke="#505050" strokeWidth="1.8">
              <circle cx="20" cy="20" r="16.3" />
              <path d="M12.8 20h.1M20 20h.1M27.2 20h.1" strokeWidth="3.6" strokeLinecap="round" />
            </svg>
            设自选
          </BarItem>
        </BarItems>
        <HomeIndicator />
      </BottomBar>

      <Dialog>
        <Hero>
          <svg width="536" height="142" viewBox="0 0 536 142">
            <path d="M35 0 H98 L31 142 H-31 Z" fill="#fff" opacity="0.09" />
            <path d="M240 93 L219 142 H328 L395 0 L352 70 Z" fill="#fff" opacity="0.02" />
            <path d="M395 0 H430 L362 142 H328 Z" fill="#fff" opacity="0.09" />
            <path d="M430 0 H536 V4 L468 142 H362 Z" fill="#fff" opacity="0.05" />
            <path d="M536 4 L468 142 H536 Z" fill="#ff3f29" opacity="0.85" />
          </svg>
          <Watermark>
            <Petals fill="rgba(255,255,255,0.5)" size={23} />
            东方财富
          </Watermark>
          <HeroText>
            <HeroTitle>逃顶小能手</HeroTitle>
            <HeroSub>虚惊一场，这波很赚</HeroSub>
          </HeroText>
        </Hero>
        <Summary>
          成飞集成
          <Drop>
            卖出后下跌<b>8.13%</b>
          </Drop>
        </Summary>
        <MiniPlot>
          <svg width="432" height="215" viewBox="60 195 1296 645" fill="none">
            <path d="M61.5 197 H1354 V837 H61.5 Z M383 197 V837 M707 197 V837 M1031 197 V837 M61 359 H1354 M61 675 H1354" stroke="#e3e6ef" strokeWidth="4" />
            <polygon points={`64,836 ${MINI_PRICE} 1350,836`} fill="rgba(255,40,40,0.06)" />
            <path d="M62 518 H1350" stroke="#666" strokeWidth="3.6" strokeDasharray="32 14" />
            <polyline points={MINI_AVG} stroke="#ffb733" strokeWidth="5" />
            <polyline points={MINI_PRICE} stroke="#ff0a0a" strokeWidth="5" />
            <path d="M350 340 V412" stroke="#2f86e4" strokeWidth="4" strokeDasharray="9 5" />
            <circle cx="349" cy="415" r="13" fill="#2f86e4" />
            <path d="M350 345 L334 326 A37 37 0 1 1 366 326 Z" fill="#5a9ae8" />
            <text x="350" y="314" fontSize="56" fontWeight="500" fill="#fff" textAnchor="middle">S</text>
          </svg>
          <MiniLabels>
            <AxisLabel $c="#f0282d">41.99</AxisLabel>
            <AxisLabel $c="#f0282d">9.78%</AxisLabel>
            <AxisLabel $c="#666">38.25</AxisLabel>
            <span />
            <AxisLabel $c="#12a312">34.51</AxisLabel>
            <AxisLabel $c="#12a312">-9.78%</AxisLabel>
          </MiniLabels>
        </MiniPlot>
        <MiniTimes>
          <span>09:30</span>
          <span>11:30</span>
          <span>15:00</span>
        </MiniTimes>
        <ShareButton>操作很棒，晒一晒</ShareButton>
        <Later>下次再说</Later>
        <Emoji viewBox="0 0 99 99">
          <circle cx="49.5" cy="49.5" r="49" fill="#fcc82c" />
          <ellipse cx="54.5" cy="46" rx="42" ry="45" fill="#ffd535" />
          <path d="M47 11 Q60 5 71 14 Q66 18 57 15 Q52 12 47 11Z" fill="#ffea5c" />
          <g fill="none" stroke="#8a271f" strokeWidth="4" strokeLinecap="round" strokeLinejoin="round">
            <path d="M25.5 24.5 Q29 28.5 37 29.8 Q28 30 21.5 34" />
            <path d="M77 24.5 Q73 28.5 63.5 29.8 Q73 30 79.5 34" />
          </g>
          <path d="M17 51 Q50 37.5 84 51 L84 57 Q50 43 17 57Z" fill="#fffbe8" />
          <path d="M17 56 Q50 41 84 56 C84 76 68 89 50.5 89 C33 89 17 76 17 56Z" fill="#8a271f" />
          <path d="M26.5 78.5 C29 67 38 61 50.5 61 C63 61 73 67 75 78 C69 85 60 89 50.5 89 C41 89 32.5 85 26.5 78.5Z" fill="#f25c60" />
        </Emoji>
      </Dialog>
    </Page>
  );
}
